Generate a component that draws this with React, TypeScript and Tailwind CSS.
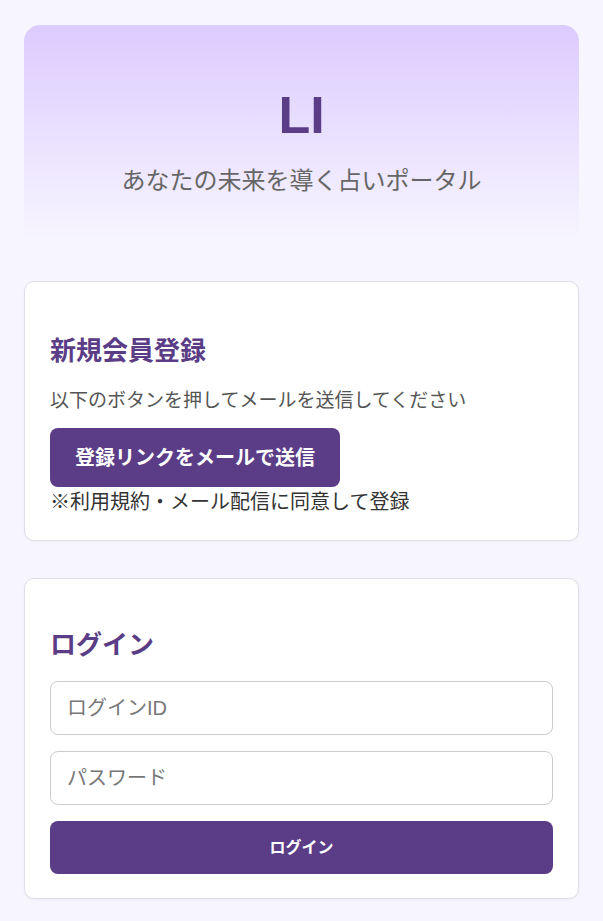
export default function App() {
  return (
    <div
      className="min-h-screen bg-[#f7f5fe] px-6 pt-[25px] pb-6"
      style={{ fontFamily: '"Liberation Sans", "Noto Sans CJK JP", sans-serif' }}
    >
      <header className="flex h-[216px] flex-col items-center rounded-2xl bg-linear-to-b from-[#dccbff] to-[#f7f5fe] pt-[64px]">
        <h1 className="text-[52px] leading-none font-bold text-[#5a3d86]">LI</h1>
        <p className="mt-[28px] text-[24px] leading-none text-[#666]">あなたの未来を導く占いポータル</p>
      </header>

      <section className="mt-[40px] flex flex-col items-start rounded-[10px] border border-[#e0dde8] bg-white px-[25px] pt-[49px] pb-[23px] shadow-[0_1px_3px_rgba(0,0,0,0.04)]">
        <h2 className="text-[26px] leading-[40px] font-bold text-[#5a3d86]">新規会員登録</h2>
        <p className="mt-[16px] text-[19px] leading-[28px] text-[#555]">以下のボタンを押してメールを送信してください</p>
        <button className="mt-[13px] h-[59px] w-[290px] rounded-[8px] bg-[#5b3d87] text-[20px] font-bold text-white">
          登録リンクをメールで送信
        </button>
        <p className="text-[20px] leading-[30px] text-[#333]">※利用規約・メール配信に同意して登録</p>
      </section>

      <section className="mt-[37px] flex flex-col rounded-[10px] border border-[#e0dde8] bg-white px-[25px] pt-[46px] pb-[24px] shadow-[0_1px_3px_rgba(0,0,0,0.04)]">
        <h2 className="text-[26px] leading-[40px] font-bold text-[#5a3d86]">ログイン</h2>
        <input
          placeholder="ログインID"
          className="mt-[16px] h-[54px] rounded-[8px] border border-[#ccc] px-[16px] text-[20px] placeholder:text-[#777] outline-none"
        />
        <input
          type="password"
          placeholder="パスワード"
          className="mt-[16px] h-[54px] rounded-[8px] border border-[#ccc] px-[16px] text-[20px] placeholder:text-[#777] outline-none"
        />
        <button className="mt-[16px] h-[53px] rounded-[8px] bg-[#5b3d87] text-[16px] font-bold text-white">ログイン</button>
      </section>
    </div>
  );
}
